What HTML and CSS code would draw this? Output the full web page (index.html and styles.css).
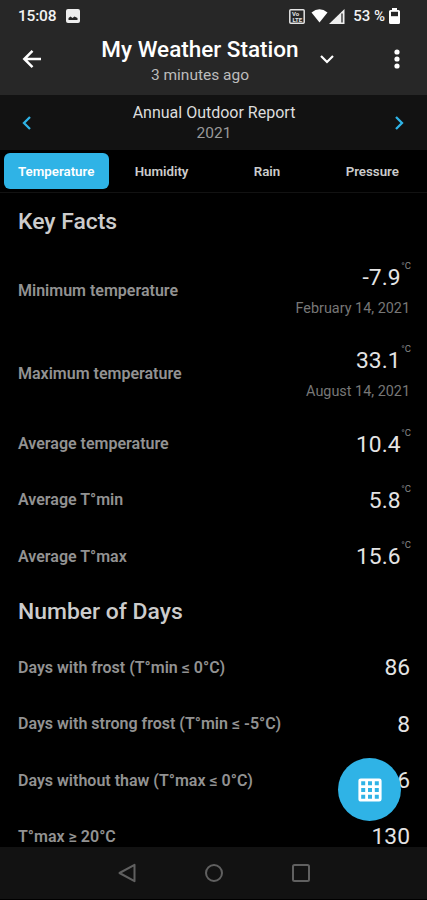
FILE: index.html
```
<!DOCTYPE html>
<html lang="en">
<head>
    <meta charset="UTF-8">
    <meta name="viewport" content="width=device-width, initial-scale=1.0">
    <title>My Weather Station</title>
    <link rel="stylesheet" href="styles.css">
</head>
<body>
    <header class="app-header">
        <div class="status-bar">
            <span class="clock">15:08</span>
            <svg class="picture-icon" width="14" height="14" viewBox="0 0 14 14">
                <rect width="14" height="14" rx="2" fill="#eee"/>
                <path d="M2.500 11V9l2-1.500L6.500 9l2-1.500L11.500 9v2z" fill="#272727"/>
            </svg>
            <svg class="volte-icon" width="16" height="15" viewBox="0 0 16 15">
                <rect x=".8" y=".8" width="14.400" height="13.400" rx="1" fill="none" stroke="#e4e4e4" stroke-width="1.500"/>
                <text x="3" y="7">Vo</text>
                <text x="3.500" y="12.500">LTE</text>
            </svg>
            <svg class="wifi-icon" width="17" height="14" viewBox="0 0 17 14">
                <path d="M.5 3.500Q8.500-3 16.500 3.500L8.500 13.500z" fill="#fff"/>
            </svg>
            <svg class="signal-icon" width="16" height="15" viewBox="0 0 16 15">
                <path d="M0 15L15.500 0V15z" fill="#eee"/>
                <path d="M13 4.500v9" stroke="#272727" stroke-width="1.300"/>
            </svg>
            <span class="percent">53 %</span>
            <svg class="battery-icon" width="11" height="16" viewBox="0 0 11 16">
                <path d="M3 0h5v2h1.500Q11 2 11 3.500v11Q11 16 9.500 16h-8Q0 16 0 14.500v-11Q0 2 1.500 2H3z" fill="#fff"/>
                <rect x="2" y="3.800" width="7" height="4.400" fill="#272727"/>
            </svg>
        </div>
        <div class="title-bar">
            <svg class="back" width="24" height="24" viewBox="0 0 24 24">
                <path d="M21 12H4.500M12.500 3.800L4.300 12l8.200 8.200" fill="none" stroke="#fff" stroke-width="2.500"/>
            </svg>
            <div class="title">
                <h1>My Weather Station</h1>
                <p>3 minutes ago</p>
            </div>
            <svg class="dropdown" width="16" height="16" viewBox="0 0 16 16">
                <path d="M2 5l6 6 6-6" fill="none" stroke="#fff" stroke-width="2.200"/>
            </svg>
            <svg class="more" width="6" height="20" viewBox="0 0 6 20">
                <circle cx="3" cy="3" r="2.600" fill="#fff"/>
                <circle cx="3" cy="10" r="2.600" fill="#fff"/>
                <circle cx="3" cy="17" r="2.600" fill="#fff"/>
            </svg>
        </div>
    </header>

    <div class="report-bar">
        <svg width="10" height="14" viewBox="0 0 10 14">
            <path d="M8 1L2 7l6 6" fill="none" stroke="#2fb3e6" stroke-width="2.300"/>
        </svg>
        <div class="report-name">
            <h2>Annual Outdoor Report</h2>
            <p>2021</p>
        </div>
        <svg width="10" height="14" viewBox="0 0 10 14">
            <path d="M2 1l6 6-6 6" fill="none" stroke="#2fb3e6" stroke-width="2.300"/>
        </svg>
    </div>

    <nav class="tabs">
        <a class="tab active">Temperature</a>
        <a class="tab">Humidity</a>
        <a class="tab">Rain</a>
        <a class="tab">Pressure</a>
    </nav>

    <main class="facts">
        <h3 class="section">Key Facts</h3>
        <div class="row tall">
            <span class="label">Minimum temperature</span>
            <div class="value"><b>-7.9<sup>°C</sup></b><small>February 14, 2021</small></div>
        </div>
        <div class="row tall">
            <span class="label">Maximum temperature</span>
            <div class="value"><b>33.1<sup>°C</sup></b><small>August 14, 2021</small></div>
        </div>
        <div class="row">
            <span class="label">Average temperature</span>
            <div class="value"><b>10.4<sup>°C</sup></b></div>
        </div>
        <div class="row">
            <span class="label">Average T°min</span>
            <div class="value"><b>5.8<sup>°C</sup></b></div>
        </div>
        <div class="row">
            <span class="label">Average T°max</span>
            <div class="value"><b>15.6<sup>°C</sup></b></div>
        </div>

        <h3 class="section days">Number of Days</h3>
        <div class="row">
            <span class="label">Days with frost (T°min ≤ 0°C)</span>
            <div class="value count"><b>86</b></div>
        </div>
        <div class="row">
            <span class="label">Days with strong frost (T°min ≤ -5°C)</span>
            <div class="value count"><b>8</b></div>
        </div>
        <div class="row">
            <span class="label">Days without thaw (T°max ≤ 0°C)</span>
            <div class="value count"><b>6</b></div>
        </div>
        <div class="row">
            <span class="label">T°max ≥ 20°C</span>
            <div class="value count"><b>130</b></div>
        </div>
    </main>

    <button class="fab">
        <svg width="24" height="24" viewBox="0 0 24 24">
            <rect x="1.800" y="1.800" width="20.400" height="20.400" rx="1" fill="none" stroke="#fff" stroke-width="2.800"/>
            <path d="M8.600 1v22M15.400 1v22M1 8.600h22M1 15.400h22" stroke="#fff" stroke-width="2.800"/>
        </svg>
    </button>

    <footer class="system-nav">
        <svg width="20" height="20" viewBox="0 0 20 20">
            <path d="M17.500 1.800v16.400L2.500 10z"/>
        </svg>
        <svg width="20" height="20" viewBox="0 0 20 20">
            <circle cx="10" cy="10" r="8"/>
        </svg>
        <svg width="20" height="20" viewBox="0 0 20 20">
            <rect x="2" y="2" width="16" height="16" rx="1.500"/>
        </svg>
    </footer>
</body>
</html>
```
FILE: styles.css
```
* {
    box-sizing: border-box;
}

body {
    display: flex;
    flex-direction: column;
    height: 900px;
    margin: 0;
    overflow: hidden;
    position: relative;
    background-color: #000;
    color: #ddd;
    font-family: Roboto, "Liberation Sans", sans-serif;
}

h1, h2, h3, p {
    margin: 0;
}

svg {
    display: block;
    flex-shrink: 0;
}

.app-header {
    height: 95px;
    flex-shrink: 0;
    background-color: #272727;
}

.status-bar {
    display: flex;
    align-items: center;
    height: 32px;
    padding: 0 27px 0 18px;
    color: #f2f2f2;
    font-size: 15.5px;
    font-weight: 500;
}

.clock {
    width: 39px;
    letter-spacing: -0.2px;
}

.picture-icon {
    margin-left: 9px;
}

.volte-icon {
    margin-left: auto;
}

.volte-icon text {
    fill: #e4e4e4;
    font-size: 6px;
    font-weight: 700;
}

.wifi-icon {
    margin-left: 6px;
}

.signal-icon {
    margin-left: 1px;
}

.percent {
    margin: 0 4px 0 8px;
    font-size: 15px;
}

.title-bar {
    display: flex;
    align-items: center;
    height: 54px;
    padding: 0 27px 0 20px;
}

.title {
    width: 198px;
    margin-left: 57px;
    padding-top: 3px;
    text-align: center;
    white-space: nowrap;
}

.title h1 {
    color: #fff;
    font-size: 22.5px;
    font-weight: 500;
    line-height: 28px;
}

.title p {
    color: #bcbcbc;
    font-size: 15.5px;
    line-height: 24px;
}

.dropdown {
    margin-left: 20px;
}

.more {
    margin-left: auto;
}

.report-bar {
    display: flex;
    align-items: center;
    justify-content: space-between;
    height: 55px;
    flex-shrink: 0;
    padding: 0 23px 0 22px;
    background-color: #121212;
    text-align: center;
}

.report-name {
    padding: 1px 0 0 2px;
}

.report-name h2 {
    color: #ddd;
    font-size: 16px;
    font-weight: 400;
    line-height: 21px;
}

.report-name p {
    color: #999;
    font-size: 15.5px;
    line-height: 21px;
}

.tabs {
    display: flex;
    height: 43px;
    flex-shrink: 0;
    padding: 3px 2px 3px 3.5px;
    border-bottom: 1px solid #121212;
}

.tab {
    display: flex;
    align-items: center;
    justify-content: center;
    width: 105.5px;
    border-radius: 6px;
    color: #ccc;
    font-size: 13.3px;
    font-weight: 600;
}

.active {
    background-color: #2fb3e6;
    color: #fff;
}

.facts {
    flex: 1;
    min-height: 0;
    padding: 0 17px 0 18px;
}

.section {
    height: 56px;
    color: #ccc;
    font-size: 22.9px;
    font-weight: 500;
    line-height: 58px;
}

.days {
    height: 55px;
    line-height: 56px;
}

.row {
    display: flex;
    align-items: center;
    justify-content: space-between;
    height: 56.3px;
}

.tall {
    height: 83.2px;
}

.label {
    color: #929292;
    font-size: 16px;
    font-weight: 600;
}

.value {
    display: flex;
    flex-direction: column;
    align-items: flex-end;
    padding-top: 2px;
}

.value b {
    position: relative;
    padding-right: 9.5px;
    color: #e4e4e4;
    font-size: 22.8px;
    font-weight: 400;
    line-height: 34px;
}

.value.count b {
    padding-right: 0;
    line-height: 20px;
}

.value sup {
    position: absolute;
    top: -1px;
    right: -1px;
    color: #888;
    font-size: 9.5px;
    line-height: 11px;
}

.value small {
    color: #777;
    font-size: 14.4px;
    line-height: 27px;
}

.fab {
    display: flex;
    align-items: center;
    justify-content: center;
    position: absolute;
    right: 26px;
    bottom: 79px;
    width: 63px;
    height: 63px;
    padding: 0;
    border: none;
    border-radius: 50%;
    background-color: #2fb3e6;
}

.system-nav {
    display: flex;
    align-items: center;
    justify-content: center;
    gap: 67px;
    height: 53px;
    flex-shrink: 0;
    background-color: #121212;
    border-bottom: 1px solid #000;
}

.system-nav svg {
    fill: none;
    stroke: #606060;
    stroke-width: 2;
    stroke-linejoin: round;
}
```
